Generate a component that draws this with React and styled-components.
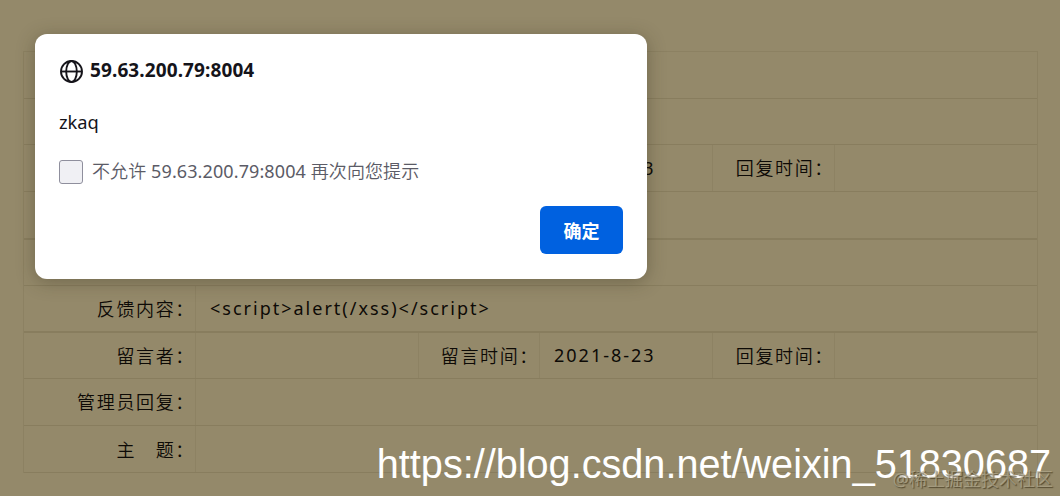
import React from 'react';
import styled, { createGlobalStyle } from 'styled-components';

const rows = [
  { height: 47, cells: [''] },
  { height: 46, cells: [''] },
  { height: 47, cells: ['', '', '', '2021-8-23', '回复时间：', ''] },
  { height: 48, cells: [''], thick: true },
  { height: 46, cells: [''] },
  { height: 47, cells: ['反馈内容：', '<script>alert(/xss)</script>'], thick: true },
  { height: 46, cells: ['留言者：', '', '留言时间：', '2021-8-23', '回复时间：', ''] },
  { height: 47, cells: ['管理员回复：', ''] },
  { height: 47, cells: ['主　题：', ''] },
];

const GlobeIcon = () => (
  <Globe viewBox="0 0 24 24">
    <circle cx="12" cy="12" r="10.1" />
    <ellipse cx="12" cy="12" rx="5.1" ry="10.1" />
    <path d="M1.9 12h20.2" />
  </Globe>
);

const AlertDialog = () => (
  <Dialog role="alertdialog">
    <Origin>
      <GlobeIcon />
      <Host>59.63.200.79:8004</Host>
    </Origin>
    <Message>zkaq</Message>
    <Suppress>
      <Checkbox />
      <SuppressText>
        不允许 <span>59.63.200.79:8004</span> 再次向您提示
      </SuppressText>
    </Suppress>
    <Actions>
      <Confirm>确定</Confirm>
    </Actions>
  </Dialog>
);

const App = () => (
  <Page>
    <GlobalStyle />
    <Board>
      {rows.map(({ height, cells, thick }, i) => (
        <Row key={i} $height={height} $thick={thick} $split={cells.length > 2}>
          {cells.map((text, j) => (
            <Cell key={j} $label={j % 2 === 0}>
              {text}
            </Cell>
          ))}
        </Row>
      ))}
    </Board>
    <AlertDialog />
    <BlogLink>https://blog.csdn.net/weixin_51830687</BlogLink>
    <Community>@稀土掘金技术社区</Community>
  </Page>
);

export default App;

const GlobalStyle = createGlobalStyle`
  * {
    box-sizing: border-box;
  }
  body {
    margin: 0;
    background: #94896a;
  }
`;

const Page = styled.div`
  position: relative;
  width: 1060px;
  height: 496px;
  padding: 51px 22px 0 23px;
  overflow: hidden;
  background: #94896a;
  color: #0d0a06;
  font-family: 'Noto Sans', 'Noto Sans CJK SC', sans-serif;
`;

const Board = styled.div`
  border: 1px solid #8c8162;
  border-bottom: 0;
`;

const Row = styled.div`
  display: grid;
  grid-template-columns: ${(props) =>
    props.$split ? '172px 223px 121px 173px 122px 1fr' : '172px 1fr'};
  height: ${(props) => props.$height}px;
  border-bottom: ${(props) => (props.$thick ? '2px' : '1px')} solid #887d5e;
`;

const Cell = styled.div`
  display: flex;
  align-items: center;
  justify-content: ${(props) => (props.$label ? 'flex-end' : 'flex-start')};
  padding: ${(props) => (props.$label ? '0 0 2px' : '0 0 1px 14px')};
  border-right: 1px solid #8d8263;
  font-size: 18px;
  font-weight: ${(props) => (props.$label ? 350 : 400)};
  letter-spacing: ${(props) => (props.$label ? 1.65 : 2)}px;
  white-space: nowrap;
  &:last-child {
    border-right: 0;
  }
  ${Row}:last-child & {
    padding-bottom: 0;
  }
`;

const Dialog = styled.div`
  position: absolute;
  top: 34px;
  left: 35px;
  display: flex;
  flex-direction: column;
  width: 612px;
  height: 245px;
  padding: 24px;
  border-radius: 12px;
  background: #fff;
  box-shadow: 0 3px 18px rgba(50, 44, 25, 0.36);
`;

const Origin = styled.div`
  display: flex;
  align-items: center;
  gap: 6px;
  height: 26px;
`;

const Globe = styled.svg`
  width: 25px;
  height: 25px;
  fill: none;
  stroke: #15141a;
  stroke-width: 1.8;
`;

const Host = styled.span`
  padding-bottom: 2px;
  font-size: 19px;
  font-weight: 700;
  letter-spacing: 0.1px;
  color: #15141a;
`;

const Message = styled.p`
  margin: 25px 0 0;
  font-size: 18.3px;
  line-height: 26px;
  color: #15141a;
`;

const Suppress = styled.label`
  display: flex;
  align-items: center;
  gap: 9px;
  height: 26px;
  margin-top: 24px;
`;

const Checkbox = styled.span`
  width: 24px;
  height: 24px;
  border: 1px solid #8f8f9d;
  border-radius: 3px;
  background: #f0f0f4;
`;

const SuppressText = styled.span`
  padding-bottom: 5px;
  font-size: 18px;
  font-weight: 350;
  letter-spacing: 0.1px;
  color: #5b5b66;
  white-space: nowrap;
  span {
    font-weight: 400;
  }
`;

const Actions = styled.div`
  display: flex;
  justify-content: flex-end;
  margin-top: 21px;
`;

const Confirm = styled.button`
  width: 83px;
  height: 48px;
  padding: 0;
  border: 0;
  border-radius: 6px;
  background: #0061e0;
  color: #fff;
  font: 700 18px 'Noto Sans CJK SC', sans-serif;
`;

const BlogLink = styled.div`
  position: absolute;
  top: 440px;
  right: 9px;
  font: 41.5px/48px 'Liberation Sans', sans-serif;
  color: #fff;
  white-space: nowrap;
  transform: scaleX(0.955);
  transform-origin: right;
`;

const Community = styled.div`
  position: absolute;
  right: 7px;
  bottom: 4px;
  font: 18px/26px 'Noto Sans', 'Noto Sans CJK SC', sans-serif;
  color: rgba(185, 177, 150, 0.65);
  text-shadow: 1px 1px 1px rgba(60, 50, 25, 0.7);
  white-space: nowrap;
`;
